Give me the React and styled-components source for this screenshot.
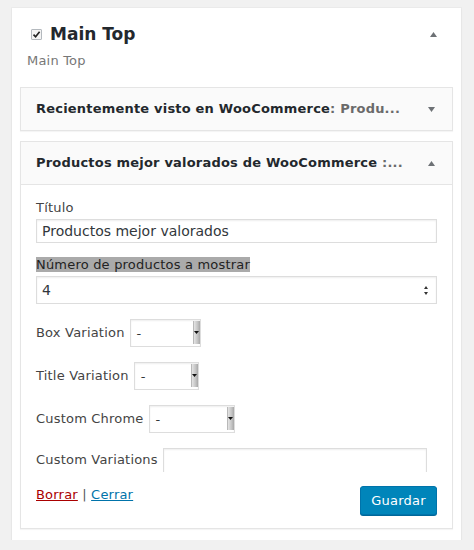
import React from 'react';
import styled, { createGlobalStyle } from 'styled-components';

const GlobalStyle = createGlobalStyle`
    * { box-sizing: border-box; }
    body {
        margin: 0;
        background-color: #f1f1f1;
        font-family: "DejaVu Sans", Verdana, sans-serif;
        font-size: 13px;
        letter-spacing: 0.2px;
        color: #444;
    }
`;

const Panel = styled.div`
    width: 449px;
    margin: 8px 0 0 12px;
    padding: 0 8px 11px;
    background-color: #fff;
    box-shadow: 0 1px 2px rgba(0, 0, 0, 0.06), 0 0 0 1px rgba(0, 0, 0, 0.025);
`;

const PanelHead = styled.div`
    padding-top: 15px;
    margin-bottom: 17px;
`;

const HeadRow = styled.div`
    display: flex;
    align-items: center;
    height: 22px;
    padding: 0 16px 0 11px;
`;

const CheckBox = styled.span`
    display: flex;
    align-items: center;
    justify-content: center;
    width: 11px;
    height: 11px;
    margin-right: 8px;
    border: 1px solid #b4b9be;
    border-radius: 1px;
    background-color: #f4f4f4;
`;

const PanelTitle = styled.h2`
    flex: 1;
    margin: 0;
    font-size: 17px;
    line-height: 22px;
    font-weight: bold;
    letter-spacing: 0;
    color: #23282d;
`;

const Subtitle = styled.div`
    margin-top: 7px;
    padding-left: 7px;
    line-height: 18px;
    color: #777;
`;

const Widget = styled.div`
    border: 1px solid #e5e5e5;
    background-color: #fff;
    box-shadow: 0 1px 1px rgba(0, 0, 0, 0.04);
    & + & {
        margin-top: 10px;
    }
`;

const WidgetHead = styled.div`
    display: flex;
    align-items: center;
    height: ${p => (p.$open ? 43 : 42)}px;
    padding: 0 17px 0 15px;
    background-color: #fafafa;
    border-bottom: ${p => (p.$open ? '1px solid #e5e5e5' : 'none')};
`;

const WidgetTitle = styled.h3`
    flex: 1;
    margin: 0 20px 0 0;
    font-size: 13px;
    line-height: 18px;
    font-weight: bold;
    color: #23282d;
    white-space: nowrap;
    overflow: hidden;
`;

const InTitle = styled.span`
    color: #6a6a6a;
`;

const WidgetBody = styled.div`
    padding: 14px 15px 13px;
`;

const Field = styled.div`
    margin-bottom: ${p => p.$gap || 13}px;
`;

const FieldLabel = styled.label`
    display: block;
    line-height: 18px;
    margin-bottom: 2px;
`;

const Selected = styled.span`
    background-color: #aaaaaa;
    color: #222;
`;

const TextInput = styled.input`
    display: block;
    width: ${p => (p.$w ? `${p.$w}px` : '100%')};
    height: ${p => p.$h || 24}px;
    margin: 0;
    padding: 0 5px;
    border: 1px solid #ddd;
    border-radius: 0;
    background-color: #fff;
    box-shadow: inset 0 1px 2px rgba(0, 0, 0, 0.07);
    font-family: "DejaVu Sans", Verdana, sans-serif;
    font-size: 14px;
    color: #32373c;
    outline: none;
`;

const NumberBox = styled.div`
    display: flex;
    align-items: center;
    height: 28px;
    padding-right: 8px;
    border: 1px solid #ddd;
    box-shadow: inset 0 1px 2px rgba(0, 0, 0, 0.07);
`;

const NumberInput = styled.input`
    flex: 1;
    height: 100%;
    padding: 0 5px;
    border: none;
    background: transparent;
    font-family: "DejaVu Sans", Verdana, sans-serif;
    font-size: 14px;
    color: #32373c;
    outline: none;
`;

const Spinner = styled.span`
    display: flex;
    flex-direction: column;
    gap: 3px;
`;

const Row = styled.div`
    display: flex;
    align-items: ${p => (p.$clip ? 'flex-start' : 'center')};
    gap: 5px;
    height: ${p => (p.$clip ? 24 : 28)}px;
    margin-bottom: ${p => (p.$clip ? 14 : 15)}px;
    overflow: ${p => (p.$clip ? 'hidden' : 'visible')};
`;

const RowLabel = styled.label`
    line-height: 18px;
    margin-top: ${p => (p.$clip ? 3 : 0)}px;
    white-space: nowrap;
`;

const Select = styled.div`
    display: flex;
    align-items: stretch;
    width: ${p => p.$w}px;
    height: 28px;
    border: 1px solid #ddd;
    background-color: #fff;
    box-shadow: inset 0 1px 2px rgba(0, 0, 0, 0.07);
    color: #32373c;
`;

const SelectValue = styled.span`
    flex: 1;
    display: flex;
    align-items: center;
    padding-left: 6px;
`;

const SelectButton = styled.span`
    display: flex;
    align-items: center;
    justify-content: center;
    width: 7px;
    margin: 1px 0 2px;
    background: linear-gradient(to right, #e4e4e4, #c4c4c4 60%, #a8a8a8);
    border-left: 1px solid #b9b9b9;
`;

const Footer = styled.div`
    display: flex;
    justify-content: space-between;
    align-items: flex-start;
`;

const Links = styled.div`
    line-height: 18px;
    color: #555;
`;

const Link = styled.a`
    color: ${p => (p.$danger ? '#a00' : '#0073aa')};
    text-decoration: underline;
    cursor: pointer;
`;

const SaveButton = styled.button`
    width: 77px;
    height: 29px;
    padding: 0;
    border: 1px solid #0073aa;
    border-radius: 3px;
    background-color: #0085ba;
    box-shadow: 0 1px 0 #006799;
    color: #fff;
    font-family: "DejaVu Sans", Verdana, sans-serif;
    font-size: 13px;
    letter-spacing: 0.2px;
    cursor: pointer;
`;

const Triangle = ({ dir = 'up', w = 7, h = 5, color = '#6d7175' }) => (
    <svg width={w} height={h} viewBox={`0 0 ${w} ${h}`} style={{ display: 'block' }}>
        <polygon
            points={dir === 'up' ? `0,${h} ${w / 2},0 ${w},${h}` : `0,0 ${w},0 ${w / 2},${h}`}
            fill={color}
        />
    </svg>
);

const Dropdown = ({ width }) => (
    <Select $w={width}>
        <SelectValue>-</SelectValue>
        <SelectButton>
            <Triangle dir="down" w={5} h={3} color="#111" />
        </SelectButton>
    </Select>
);

const App = () => {
    return (
        <>
            <GlobalStyle />
            <Panel>
                <PanelHead>
                    <HeadRow>
                        <CheckBox>
                            <svg width="9" height="9" viewBox="0 0 9 9">
                                <path d="M1.5 4.6 L3.6 6.8 L7.6 1.8" fill="none" stroke="#222" strokeWidth="1.6" />
                            </svg>
                        </CheckBox>
                        <PanelTitle>Main Top</PanelTitle>
                        <Triangle dir="up" />
                    </HeadRow>
                    <Subtitle>Main Top</Subtitle>
                </PanelHead>

                <Widget>
                    <WidgetHead>
                        <WidgetTitle>
                            Recientemente visto en WooCommerce<InTitle>: Produ...</InTitle>
                        </WidgetTitle>
                        <Triangle dir="down" />
                    </WidgetHead>
                </Widget>

                <Widget>
                    <WidgetHead $open>
                        <WidgetTitle>
                            Productos mejor valorados de WooCommerce<InTitle> :...</InTitle>
                        </WidgetTitle>
                        <Triangle dir="up" />
                    </WidgetHead>
                    <WidgetBody>
                        <Field>
                            <FieldLabel>Título</FieldLabel>
                            <TextInput type="text" defaultValue="Productos mejor valorados" />
                        </Field>
                        <Field $gap={15}>
                            <FieldLabel><Selected>Número de productos a mostrar</Selected></FieldLabel>
                            <NumberBox>
                                <NumberInput type="text" defaultValue="4" />
                                <Spinner>
                                    <Triangle dir="up" w={4} h={3} color="#333" />
                                    <Triangle dir="down" w={4} h={3} color="#333" />
                                </Spinner>
                            </NumberBox>
                        </Field>

                        <Row>
                            <RowLabel>Box Variation</RowLabel>
                            <Dropdown width={71} />
                        </Row>
                        <Row>
                            <RowLabel>Title Variation</RowLabel>
                            <Dropdown width={65} />
                        </Row>
                        <Row>
                            <RowLabel>Custom Chrome</RowLabel>
                            <Dropdown width={86} />
                        </Row>
                        <Row $clip>
                            <RowLabel $clip>Custom Variations</RowLabel>
                            <TextInput type="text" $w={264} $h={32} />
                        </Row>

                        <Footer>
                            <Links>
                                <Link $danger>Borrar</Link> | <Link>Cerrar</Link>
                            </Links>
                            <SaveButton>Guardar</SaveButton>
                        </Footer>
                    </WidgetBody>
                </Widget>
            </Panel>
        </>
    );
};

export default App;
